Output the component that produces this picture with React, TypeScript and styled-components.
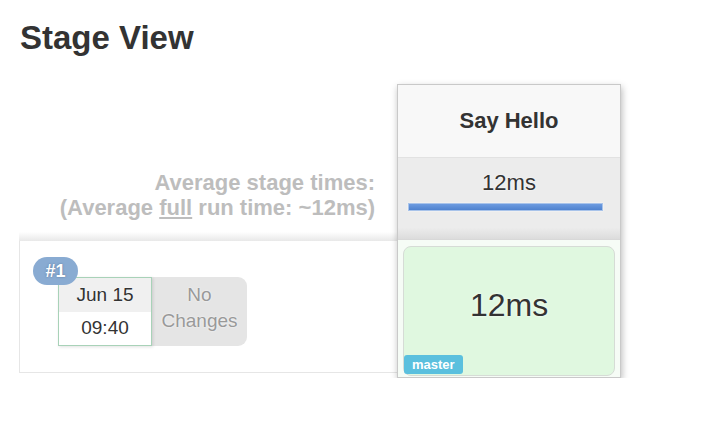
import styled, { createGlobalStyle } from 'styled-components';

const GlobalStyle = createGlobalStyle`
  body {
    margin: 0;
    background: #fff;
    font-family: "Liberation Sans", Arial, Helvetica, sans-serif;
    color: #333;
  }
`;

const Page = styled.div`
  padding: 20px 0 0 0;
`;

const Title = styled.h1`
  margin: 0 0 29px 20px;
  font-size: 33px;
  line-height: 35px;
  font-weight: bold;
  color: #333;
`;

const Table = styled.div`
  display: flex;
  align-items: flex-start;
  margin-left: 19px;
`;

const LeftCol = styled.div`
  width: 378px;
  display: flex;
  flex-direction: column;
`;

const HeaderSpacer = styled.div`
  height: 74px;
`;

const Averages = styled.div`
  height: 83px;
  box-sizing: border-box;
  padding: 12px 22px 0 0;
  text-align: right;
  font-size: 22px;
  line-height: 25px;
  font-weight: bold;
  color: #bdbdbd;

  u {
    text-decoration: underline;
  }
`;

const RunRow = styled.div`
  position: relative;
  height: 132px;
  box-sizing: border-box;
  border-left: 1px solid #e6e6e6;
  border-bottom: 1px solid #e6e6e6;
  padding: 36px 0 0 38px;
  display: flex;
  align-items: flex-start;

  &::before {
    content: '';
    position: absolute;
    left: -1px;
    right: 0;
    top: -9px;
    height: 9px;
    background: linear-gradient(to bottom, rgba(230, 230, 230, 0), #e8e8e8);
  }
`;

const RunBadge = styled.div`
  position: absolute;
  left: 13px;
  top: 16px;
  width: 45px;
  height: 28px;
  border-radius: 14px;
  background: #89abd2;
  color: #fff;
  font-size: 18px;
  font-weight: bold;
  line-height: 28px;
  text-align: center;
  text-shadow: 0 0 2px rgba(60, 80, 110, 0.6);
  z-index: 2;
`;

const DateBox = styled.div`
  width: 94px;
  height: 69px;
  box-sizing: border-box;
  border: 1px solid #a8d2b8;
  display: flex;
  flex-direction: column;
  box-shadow: 1px 1px 3px rgba(0, 0, 0, 0.12);
  position: relative;
  z-index: 1;
`;

const DatePart = styled.div<{ $shade?: boolean }>`
  flex: 1;
  display: flex;
  align-items: center;
  justify-content: center;
  background: ${({ $shade }) => ($shade ? '#f0f0f0' : '#fff')};
  font-size: 19px;
  color: #333;
  text-shadow: 0 0 2px #fff;
`;

const Changes = styled.div`
  width: 95px;
  height: 69px;
  box-sizing: border-box;
  padding-top: 5px;
  background: #e5e5e5;
  border-radius: 0 9px 9px 0;
  text-align: center;
  font-size: 19px;
  line-height: 26px;
  color: #999;
  text-shadow: 0 0 2px #fff;
`;

const StageCol = styled.div`
  width: 224px;
  box-sizing: border-box;
  border: 1px solid #c9c9c9;
  background: #fff;
  box-shadow: 1px 3px 7px rgba(0, 0, 0, 0.28);
  display: flex;
  flex-direction: column;
  position: relative;
  z-index: 3;
`;

const StageHeader = styled.div`
  height: 72px;
  background: #f8f8f8;
  border-bottom: 1px solid #e2e2e2;
  display: flex;
  align-items: center;
  justify-content: center;
  font-size: 22px;
  font-weight: bold;
  color: #333;
`;

const StageAverage = styled.div`
  height: 82px;
  box-sizing: border-box;
  padding-top: 13px;
  background: linear-gradient(to bottom, #ececec 0%, #ececec 86%, #dcdcdc 100%);
  border-bottom: 1px solid #d8d8d8;
  text-align: center;
  font-size: 22px;
  line-height: 24px;
  color: #333;
  text-shadow: 0 0 2px #fff;
`;

const Bar = styled.div`
  height: 8px;
  margin: 8px 0 0 10px;
  box-sizing: border-box;
  border: 1px solid #a8c3ea;
  background: linear-gradient(to bottom, #6c9be0, #4f82cf);
  box-shadow: 0 0 2px rgba(255, 255, 255, 0.9);
`;

const CellWrap = styled.div`
  padding: 6px 5px 1px 5px;
  background: #f6fcf6;
`;

const StageCell = styled.div`
  position: relative;
  height: 130px;
  box-sizing: border-box;
  border: 1px solid #d6dcd6;
  border-radius: 8px;
  background: #e0f8e0;
  display: flex;
  align-items: center;
  justify-content: center;
  padding-bottom: 12px;
  font-size: 32px;
  color: #333;
  text-shadow: 0 0 3px #fff;
`;

const BranchTag = styled.span`
  position: absolute;
  left: 0;
  bottom: 1px;
  height: 19px;
  padding: 0 8px;
  border-radius: 3px;
  background: #5bc0de;
  color: #fff;
  font-size: 13px;
  font-weight: bold;
  line-height: 19px;
  text-shadow: none;
`;

export default function App() {
  const avgMs = 12;
  const barPct = 88;
  return (
    <Page>
      <GlobalStyle />
      <Title>Stage View</Title>
      <Table>
        <LeftCol>
          <HeaderSpacer />
          <Averages>
            Average stage times:
            <br />
            (Average <u>full</u> run time: ~{avgMs}ms)
          </Averages>
          <RunRow>
            <RunBadge>#1</RunBadge>
            <DateBox>
              <DatePart $shade>Jun 15</DatePart>
              <DatePart>09:40</DatePart>
            </DateBox>
            <Changes>
              No
              <br />
              Changes
            </Changes>
          </RunRow>
        </LeftCol>
        <StageCol>
          <StageHeader>Say Hello</StageHeader>
          <StageAverage>
            {avgMs}ms
            <Bar style={{ width: `${barPct}%` }} />
          </StageAverage>
          <CellWrap>
            <StageCell>
              {avgMs}ms
              <BranchTag>master</BranchTag>
            </StageCell>
          </CellWrap>
        </StageCol>
      </Table>
    </Page>
  );
}
